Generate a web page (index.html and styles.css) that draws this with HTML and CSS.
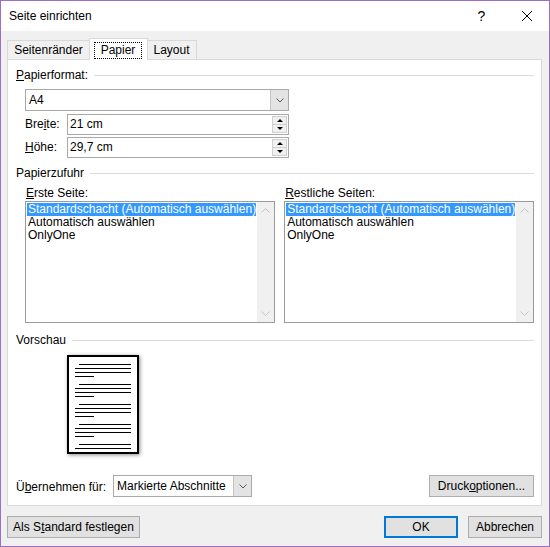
FILE: index.html
```html
<!DOCTYPE html>
<html>
<head>
  <meta charset="utf-8">
  <title>Seite einrichten</title>
  <link rel="stylesheet" href="styles.css">
</head>
<body>
  <div class="dialog">
    <div class="titlebar">
      <div class="title">Seite einrichten</div>
      <div class="caption-btn help">?</div>
      <div class="caption-btn">
        <svg width="10" height="10" viewBox="0 0 10 10"><path d="M0 0L10 10M10 0L0 10" stroke="#000" stroke-width="1"/></svg>
      </div>
    </div>
    <div class="content">
      <div class="tabs">
        <div class="tab first">Seitenränder</div>
        <div class="tab active"><span class="focus">Papier</span></div>
        <div class="tab last">Layout</div>
      </div>
      <div class="panel">
        <div class="group"><span><u>P</u>apierformat:</span></div>
        <div class="combo size">
          <span class="value">A4</span>
          <span class="drop"><svg width="8" height="5" viewBox="0 0 8 5"><path d="M0.5 0.5L4 4L7.5 0.5" fill="none" stroke="#555"/></svg></span>
        </div>
        <div class="field first-field">
          <div class="label">Bre<u>i</u>te:</div>
          <div class="spin">
            <span class="value">21 cm</span>
            <span class="arrows"><span class="arrow up"></span><span class="arrow down"></span></span>
          </div>
        </div>
        <div class="field">
          <div class="label"><u>H</u>öhe:</div>
          <div class="spin">
            <span class="value">29,7 cm</span>
            <span class="arrows"><span class="arrow up"></span><span class="arrow down"></span></span>
          </div>
        </div>

        <div class="group gap-feed"><span>Papierzufuhr</span></div>
        <div class="columns">
          <div class="col">
            <div class="col-label"><u>E</u>rste Seite:</div>
            <div class="listbox">
              <div class="items">
                <div class="item selected">Standardschacht (Automatisch auswählen)</div>
                <div class="item">Automatisch auswählen</div>
                <div class="item">OnlyOne</div>
              </div>
              <div class="scrollbar">
                <svg width="9" height="5" viewBox="0 0 9 5"><path d="M0.5 4.5L4.5 0.5L8.5 4.5" fill="none" stroke="#c2c2c2"/></svg>
                <svg width="9" height="5" viewBox="0 0 9 5"><path d="M0.5 0.5L4.5 4.5L8.5 0.5" fill="none" stroke="#c2c2c2"/></svg>
              </div>
            </div>
          </div>
          <div class="col">
            <div class="col-label"><u>R</u>estliche Seiten:</div>
            <div class="listbox">
              <div class="items">
                <div class="item selected">Standardschacht (Automatisch auswählen)</div>
                <div class="item">Automatisch auswählen</div>
                <div class="item">OnlyOne</div>
              </div>
              <div class="scrollbar">
                <svg width="9" height="5" viewBox="0 0 9 5"><path d="M0.5 4.5L4.5 0.5L8.5 4.5" fill="none" stroke="#c2c2c2"/></svg>
                <svg width="9" height="5" viewBox="0 0 9 5"><path d="M0.5 0.5L4.5 4.5L8.5 0.5" fill="none" stroke="#c2c2c2"/></svg>
              </div>
            </div>
          </div>
        </div>

        <div class="group gap-preview"><span>Vorschau</span></div>
        <div class="page">
          <svg width="68" height="95" viewBox="0 0 68 95" stroke="#000" stroke-width="1">
            <path d="M10 7.5H62M6 11.5H62M6 15.5H62M6 19.5H25"/>
            <path d="M10 27.5H62M6 31.5H62M6 35.5H62M6 39.5H25"/>
            <path d="M10 47.5H62M6 51.5H62M6 55.5H62M6 59.5H25"/>
            <path d="M10 67.5H62M6 71.5H62M6 75.5H62M6 79.5H25"/>
            <path d="M10 87.5H62M6 91.5H62"/>
          </svg>
        </div>

        <div class="apply">
          <div class="apply-label">Ü<u>b</u>ernehmen für:</div>
          <div class="combo sections">
            <span class="value">Markierte Abschnitte</span>
            <span class="drop"><svg width="8" height="5" viewBox="0 0 8 5"><path d="M0.5 0.5L4 4L7.5 0.5" fill="none" stroke="#555"/></svg></span>
          </div>
          <div class="button print">Druck<u>o</u>ptionen...</div>
        </div>
      </div>
      <div class="footer">
        <div class="button default">Als S<u>t</u>andard festlegen</div>
        <div class="button ok">OK</div>
        <div class="button cancel">Abbrechen</div>
      </div>
    </div>
  </div>
</body>
</html>
```

FILE: styles.css
```css
body {
  margin: 0;
  font: 12px "Liberation Sans", Arial, sans-serif;
  color: #000;
  background: #fff;
}
u {
  text-decoration: underline;
  text-underline-offset: 1px;
}
.dialog {
  width: 550px;
  height: 547px;
  box-sizing: border-box;
  border: 1px solid #9b6fc8;
  background: #f0f0f0;
  display: flex;
  flex-direction: column;
}

/* title bar */
.titlebar {
  height: 30px;
  background: #fff;
  display: flex;
  align-items: center;
}
.title {
  flex: 1;
  padding-left: 8px;
  padding-bottom: 1px;
}
.caption-btn {
  width: 45px;
  height: 30px;
  display: flex;
  align-items: center;
  justify-content: center;
}
.help {
  font-size: 14px;
}

.content {
  flex: 1;
  padding: 7px 7px 8px 6px;
  display: flex;
  flex-direction: column;
}

/* tabs */
.tabs {
  height: 21px;
  display: flex;
  align-items: flex-end;
}
.tab {
  height: 19px;
  box-sizing: border-box;
  border: 1px solid #d9d9d9;
  border-bottom: none;
  background: #f0f0f0;
  text-align: center;
  line-height: 18px;
}
.tab.first {
  width: 83px;
}
.tab.active {
  width: 59px;
  height: 22px;
  margin-left: -1px;
  margin-bottom: -1px;
  background: #fff;
  position: relative;
  z-index: 1;
}
.tab.last {
  width: 50px;
  margin-left: -1px;
  border-left: none;
}
.focus {
  display: block;
  margin: 3px 5px 0 4px;
  height: 17px;
  box-sizing: border-box;
  border: 1px dotted #000;
  line-height: 15px;
}

/* panel */
.panel {
  height: 447px;
  box-sizing: border-box;
  border: 1px solid #d9d9d9;
  background: #fff;
  padding: 8px 7px 8px 8px;
  display: flex;
  flex-direction: column;
}
.group {
  display: flex;
  align-items: center;
  height: 14px;
  line-height: 14px;
}
.group::after {
  content: "";
  flex: 1;
  height: 1px;
  background: #dcdcdc;
  margin-left: 6px;
}
.gap-feed {
  margin-top: 8px;
}
.gap-preview {
  margin-top: 10px;
}

.combo {
  display: flex;
  height: 22px;
  box-sizing: border-box;
  border: 1px solid #a9a9a9;
  background: #fff;
}
.combo .value {
  flex: 1;
  padding-left: 3px;
  line-height: 20px;
}
.drop {
  width: 17px;
  background: #e3e3e3;
  border-left: 1px solid #c4c4c4;
  display: flex;
  align-items: center;
  justify-content: center;
}
.size {
  width: 264px;
  margin: 7px 0 0 9px;
}

.field {
  display: flex;
  margin: 2px 0 0 9px;
}
.first-field {
  margin-top: 3px;
}
.label {
  width: 42px;
  line-height: 21px;
}
.spin {
  width: 222px;
  height: 21px;
  box-sizing: border-box;
  border: 1px solid #a9a9a9;
  display: flex;
}
.spin .value {
  flex: 1;
  padding-left: 2px;
  line-height: 19px;
}
.arrows {
  width: 15px;
  margin: 1px 1px 1px 0;
  display: flex;
  flex-direction: column;
  border: 1px solid #d0d0d0;
  background: #f0f0f0;
  box-sizing: border-box;
}
.arrow {
  flex: 1;
  display: flex;
  align-items: center;
  justify-content: center;
}
.arrow.up {
  border-bottom: 1px solid #d0d0d0;
}
.arrow::before {
  content: "";
  border-left: 3px solid transparent;
  border-right: 3px solid transparent;
}
.arrow.up::before {
  border-bottom: 3px solid #000;
}
.arrow.down::before {
  border-top: 3px solid #000;
}

/* paper source lists */
.columns {
  display: flex;
  gap: 9px;
  margin: 6px 0 0 9px;
}
.col {
  flex: 1;
}
.col-label {
  height: 15px;
  line-height: 15px;
  padding-left: 1px;
}
.listbox {
  height: 122px;
  box-sizing: border-box;
  border: 1px solid #9a9a9a;
  display: flex;
}
.items {
  flex: 1;
  padding: 1px 1px 0 1px;
}
.item {
  height: 13px;
  line-height: 13px;
  padding-left: 1px;
  white-space: nowrap;
}
.item.selected {
  background: #3399ff;
  color: #fff;
}
.scrollbar {
  width: 17px;
  background: #f0f0f0;
  display: flex;
  flex-direction: column;
  align-items: center;
  justify-content: space-between;
  padding: 6px 0 6px;
}

/* preview */
.page {
  width: 72px;
  height: 99px;
  box-sizing: border-box;
  border: 2px solid #000;
  margin: 8px 0 0 51px;
  background: #fff;
  box-shadow: 1px 1px 4px rgba(0, 0, 0, .45);
}
.page svg {
  display: block;
}

.apply {
  margin-top: auto;
  display: flex;
  align-items: center;
}
.apply-label {
  width: 97px;
  padding-top: 2px;
}
.sections {
  width: 139px;
}
.button {
  height: 22px;
  box-sizing: border-box;
  border: 1px solid #adadad;
  background: #e1e1e1;
  text-align: center;
  line-height: 20px;
}
.print {
  width: 105px;
  margin-left: auto;
}

/* bottom buttons */
.footer {
  margin-top: 10px;
  display: flex;
  gap: 10px;
}
.default {
  width: 133px;
}
.ok {
  width: 74px;
  margin-left: auto;
  border: 2px solid #0078d7;
  line-height: 18px;
}
.cancel {
  width: 74px;
}
```
